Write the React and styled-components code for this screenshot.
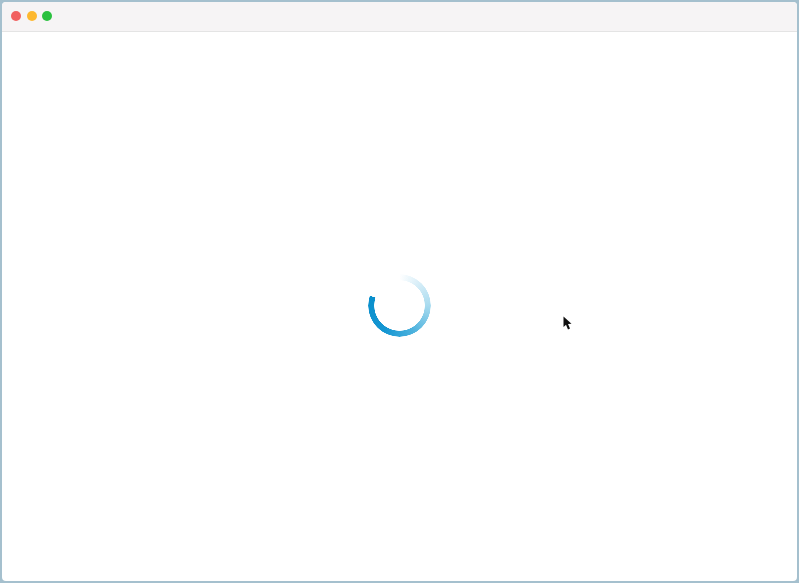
import React from 'react';
import styled, { createGlobalStyle } from 'styled-components';

const GlobalStyle = createGlobalStyle`
  html, body, #root {
    height: 100%;
    margin: 0;
    background: #a5c0ce;
  }
`;

const Window = styled.div`
  position: relative;
  box-sizing: border-box;
  height: 100vh;
  display: flex;
  flex-direction: column;
  border: 2px solid #a5c0ce;
  border-radius: 6px;
  background: #ffffff;
  overflow: hidden;
`;

const TitleBar = styled.div`
  flex: 0 0 28px;
  display: flex;
  align-items: center;
  gap: 5.5px;
  padding: 0 0 1px 9px;
  background: #f6f4f5;
  border-bottom: 1px solid #e4e4e4;
`;

const Dot = styled.span`
  width: 10px;
  height: 10px;
  border-radius: 50%;
  background: ${props => props.color};
`;

const Content = styled.div`
  flex: 1;
  display: flex;
  align-items: center;
  justify-content: center;
`;

const Spinner = styled.div`
  width: 63px;
  height: 63px;
  margin-bottom: 2px;
  border-radius: 50%;
  background: conic-gradient(
    from 0deg,
    rgba(255, 255, 255, 0) 0deg,
    #d8eef8 40deg,
    #a8dbef 90deg,
    #4fb3de 150deg,
    #1496d2 210deg,
    #0a8fcc 288deg,
    rgba(255, 255, 255, 0) 288.5deg
  );
  mask: radial-gradient(circle, transparent 25px, #000 25.5px, #000 31px, transparent 31.5px);
`;

const Cursor = styled.svg`
  position: absolute;
  left: 559.5px;
  top: 314px;
  width: 11px;
  height: 15px;
`;

const App = () => {
  return (
    <>
      <GlobalStyle />
      <Window>
        <TitleBar>
          <Dot color="#f1605f" />
          <Dot color="#fdb82f" />
          <Dot color="#2ac13f" />
        </TitleBar>
        <Content>
          <Spinner />
        </Content>
        <Cursor viewBox="0 0 11 15">
          <path d="M1.5 0.5 L1.5 11 L4 8.8 L6 13.5 L8 12.6 L6 8 L9.5 7.8 Z" fill="#111" />
        </Cursor>
      </Window>
    </>
  );
};

export default App;
